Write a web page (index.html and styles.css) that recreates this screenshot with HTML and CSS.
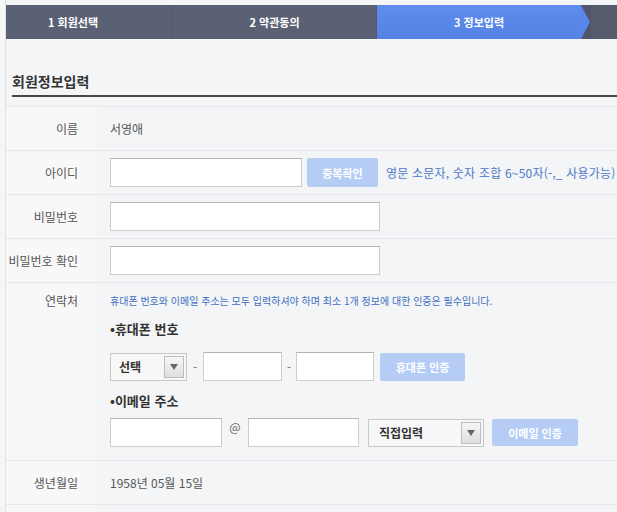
FILE: index.html
```html
<!DOCTYPE html>
<html lang="ko">
<head>
  <meta charset="UTF-8">
  <meta name="viewport" content="width=device-width, initial-scale=1.0">
  <title>회원정보입력</title>
  <link rel="stylesheet" href="styles.css">
</head>
<body>
  <div class="page">
    <nav class="steps">
      <div class="step step-first">1 회원선택</div>
      <div class="step">2 약관동의</div>
      <div class="step step-on">3 정보입력</div>
      <div class="step step-rest"></div>
    </nav>

    <h2 class="title">회원정보입력</h2>

    <div class="form-table">
      <div class="row">
        <div class="label">이름</div>
        <div class="value">서영애</div>
      </div>

      <div class="row">
        <div class="label">아이디</div>
        <div class="value">
          <input type="text" class="input input-id">
          <button type="button" class="btn btn-check">중복확인</button>
          <span class="hint">영문 소문자, 숫자 조합 6~50자(-,_ 사용가능)</span>
        </div>
      </div>

      <div class="row">
        <div class="label">비밀번호</div>
        <div class="value">
          <input type="password" class="input input-pw">
        </div>
      </div>

      <div class="row">
        <div class="label">비밀번호 확인</div>
        <div class="value">
          <input type="password" class="input input-pw">
        </div>
      </div>

      <div class="row row-top">
        <div class="label">연락처</div>
        <div class="value value-block">
          <p class="notice">휴대폰 번호와 이메일 주소는 모두 입력하셔야 하며 최소 1개 정보에 대한 인증은 필수입니다.</p>

          <h3 class="sub">•휴대폰 번호</h3>
          <div class="line line-phone">
            <div class="select select-phone">
              <span>선택</span>
              <span class="arrow"></span>
            </div>
            <span class="dash">-</span>
            <input type="text" class="input input-tel">
            <span class="dash dash-narrow">-</span>
            <input type="text" class="input input-tel input-tel-last">
            <button type="button" class="btn btn-phone">휴대폰 인증</button>
          </div>

          <h3 class="sub sub-mail">•이메일 주소</h3>
          <div class="line line-mail">
            <input type="text" class="input input-mail">
            <span class="at">@</span>
            <input type="text" class="input input-mail input-domain">
            <div class="select select-mail">
              <span>직접입력</span>
              <span class="arrow"></span>
            </div>
            <button type="button" class="btn btn-mail">이메일 인증</button>
          </div>
        </div>
      </div>

      <div class="row">
        <div class="label">생년월일</div>
        <div class="value">1958년 05월 15일</div>
      </div>

      <div class="row">
        <div class="label"></div>
        <div class="value"></div>
      </div>
    </div>
  </div>
</body>
</html>
```

FILE: styles.css
```css
body {
  margin: 0;
  background-color: #f5f6f8;
  font-family: "Noto Sans CJK KR", "Noto Sans", sans-serif;
  font-size: 12px;
  color: #555;
  overflow: hidden;
}

.page {
  margin-left: 5px;
  padding-top: 5px;
  border-left: 1px solid #e2e3e6;
  min-height: 512px;
  background-color: #f4f5f7;
}

/* step bar */
.steps {
  display: flex;
  height: 34px;
  background-color: #5b6174;
  overflow: hidden;
}

.step {
  flex: none;
  width: 204px;
  box-sizing: border-box;
  display: flex;
  align-items: center;
  justify-content: center;
  color: #fff;
  font-size: 11px;
  font-weight: bold;
  border-right: 1px solid #53596b;
}

.step-first {
  width: 167px;
  padding-right: 32px;
}

.step-on {
  position: relative;
  background: linear-gradient(#5e8cef, #5582e4);
  border-right: none;
}

.step-on::after {
  content: "";
  position: absolute;
  left: 100%;
  top: 0;
  border-left: 9px solid #5986ea;
  border-top: 17px solid transparent;
  border-bottom: 17px solid transparent;
}

.step-rest {
  flex: 1;
  width: auto;
  border-right: none;
  background-color: #575c6d;
  box-shadow: inset 10px 0 0 #50556a;
}

/* heading */
.title {
  margin: 0 0 0 6px;
  padding: 33px 0 5px;
  font-size: 14px;
  line-height: 18px;
  color: #333;
  border-bottom: 2px solid #474747;
}

/* table */
.form-table {
  margin-top: 9px;
  border-top: 1px solid #e6e7ea;
}

.row {
  display: grid;
  grid-template-columns: 91px 1fr;
  min-height: 43px;
  border-bottom: 1px solid #e6e7ea;
}

.label {
  display: flex;
  align-items: center;
  justify-content: flex-end;
  padding-right: 19px;
  background-color: #f8f8f9;
  color: #555;
  white-space: nowrap;
}

.value {
  display: flex;
  align-items: center;
  padding-left: 13px;
  white-space: nowrap;
}

.row-top .label {
  align-items: flex-start;
  padding-top: 9px;
  line-height: 18px;
}

.value-block {
  display: block;
  padding-top: 11px;
  padding-bottom: 13px;
}

.input {
  height: 29px;
  box-sizing: border-box;
  margin: 0;
  border: 1px solid #cdcdcd;
  border-top-color: #b4b4b4;
  background-color: #fff;
}

.input-id { width: 192px; }
.input-pw { width: 270px; }
.input-tel { width: 79px; }
.input-tel-last { width: 78px; }
.input-mail { width: 112px; }
.input-domain { width: 111px; }

.btn {
  height: 29px;
  margin: 0;
  border: none;
  border-radius: 2px;
  background-color: #b5cdf5;
  color: #fff;
  font-family: inherit;
  font-size: 11px;
  font-weight: bold;
}

.btn-check {
  width: 71px;
  margin-left: 5px;
}

.hint {
  margin-left: 8px;
  color: #4a78c6;
  font-size: 12px;
  letter-spacing: 0.2px;
}

.notice {
  margin: 0;
  font-size: 10px;
  line-height: 14px;
  color: #3f6fc3;
}

.sub {
  margin: 12px 0 0;
  font-size: 13px;
  line-height: 18px;
  color: #333;
}

.sub-mail {
  margin-top: 11px;
}

.line {
  display: flex;
  align-items: center;
}

.line-phone {
  margin-top: 14px;
}

.line-mail {
  margin-top: 8px;
}

.dash {
  width: 16px;
  text-align: center;
  color: #777;
}

.dash-narrow {
  width: 14px;
}

.at {
  width: 26px;
  text-align: center;
  align-self: flex-start;
  color: #666;
  font-size: 12px;
}

.select {
  height: 28px;
  box-sizing: border-box;
  display: flex;
  align-items: center;
  justify-content: space-between;
  padding: 0 2px 0 8px;
  border: 1px solid #c8c8c8;
  background-color: #f7f7f7;
  color: #333;
  font-weight: bold;
}

.select-phone { width: 77px; }

.select-mail {
  width: 116px;
  margin-left: 9px;
  padding-left: 10px;
}

.arrow {
  position: relative;
  width: 20px;
  height: 22px;
  box-sizing: border-box;
  border: 1px solid #bdbdbd;
  background: linear-gradient(#f6f6f6, #dedede);
}

.arrow::after {
  content: "";
  position: absolute;
  left: 5px;
  top: 7px;
  border-top: 6px solid #666;
  border-left: 4px solid transparent;
  border-right: 4px solid transparent;
}

.btn-phone {
  width: 85px;
  height: 28px;
  margin-left: 6px;
}

.btn-mail {
  width: 86px;
  height: 27px;
  margin-left: 8px;
}
```
